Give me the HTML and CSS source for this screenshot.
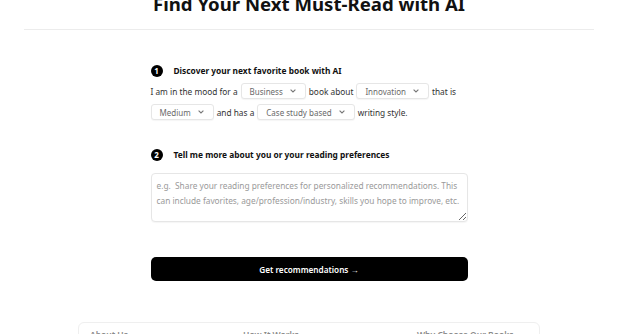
FILE: index.html
```html
<!DOCTYPE html>
<html lang="en">
<head>
<meta charset="utf-8">
<title>Find Your Next Must-Read with AI</title>
<link rel="stylesheet" href="styles.css">
</head>
<body>
<div class="page">
  <header class="top">
    <h1>Find Your Next Must-Read with AI</h1>
  </header>

  <main class="form">
    <div class="step">
      <span class="num">1</span>
      <h2>Discover your next favorite book with AI</h2>
    </div>
    <div class="line">
      <span>I am in the mood for a</span>
      <div class="select"><span>Business</span><svg width="6" height="4" viewBox="0 0 6 4"><path d="M0.6 0.6L3 3L5.4 0.6" fill="none" stroke="#777" stroke-width="1.1"/></svg></div>
      <span>book about</span>
      <div class="select"><span>Innovation</span><svg width="6" height="4" viewBox="0 0 6 4"><path d="M0.6 0.6L3 3L5.4 0.6" fill="none" stroke="#777" stroke-width="1.1"/></svg></div>
      <span>that is</span>
    </div>
    <div class="line">
      <div class="select"><span>Medium</span><svg width="6" height="4" viewBox="0 0 6 4"><path d="M0.6 0.6L3 3L5.4 0.6" fill="none" stroke="#777" stroke-width="1.1"/></svg></div>
      <span>and has a</span>
      <div class="select"><span>Case study based</span><svg width="6" height="4" viewBox="0 0 6 4"><path d="M0.6 0.6L3 3L5.4 0.6" fill="none" stroke="#777" stroke-width="1.1"/></svg></div>
      <span>writing style.</span>
    </div>

    <div class="step step2">
      <span class="num">2</span>
      <h2>Tell me more about you or your reading preferences</h2>
    </div>
    <textarea class="prefs" placeholder="e.g.  Share your reading preferences for personalized recommendations. This&#10;can include favorites, age/profession/industry, skills you hope to improve, etc."></textarea>

    <button class="go" type="button">Get recommendations →</button>
  </main>

  <section class="info">
    <h3 class="c1">About Us</h3>
    <h3 class="c2">How It Works</h3>
    <h3 class="c3">Why Choose Our Books</h3>
  </section>
</div>
</body>
</html>
```

FILE: styles.css
```css
* { box-sizing: border-box; }

html, body {
  margin: 0;
  padding: 0;
  background: #fff;
  overflow: hidden;
}

body {
  font-family: "Noto Sans", "Open Sans", sans-serif;
  color: #222;
  font-size: 8.3px;
}

.page {
  width: 618px;
  margin-top: -8px;
}

.top {
  margin: 0 24px;
  padding-bottom: 13px;
  border-bottom: 1px solid #ececec;
}

.top h1 {
  margin: 0;
  font-size: 18.6px;
  line-height: 24px;
  font-weight: 700;
  text-align: center;
  color: #111;
}

.form {
  width: 317px;
  margin: 35px auto 0;
  display: flex;
  flex-direction: column;
}

.step {
  display: flex;
  align-items: center;
  gap: 11px;
  height: 12px;
}

.step2 { margin-top: 29px; }

.num {
  width: 12px;
  height: 12px;
  border-radius: 50%;
  background: #000;
  color: #fff;
  font-size: 8px;
  font-weight: 700;
  line-height: 12px;
  text-align: center;
  flex: none;
}

.step h2 {
  margin: 0;
  font-size: 8.35px;
  font-weight: 700;
  color: #111;
  line-height: 12px;
}

.line {
  display: flex;
  align-items: center;
  gap: 3px;
  height: 16px;
  margin-top: 5px;
  color: #333;
  white-space: nowrap;
}

.step + .line { margin-top: 6px; }

.select {
  display: flex;
  align-items: center;
  gap: 7px;
  height: 16px;
  padding: 0 9px 0 8px;
  border: 1px solid #e6e6e6;
  border-radius: 3px;
  background: #fff;
  color: #6a6a6a;
  font-size: 8px;
  box-shadow: 0 1px 1px rgba(0,0,0,0.04);
}

.select svg { flex: none; }

.prefs {
  display: block;
  width: 317px;
  height: 49px;
  margin-top: 12px;
  padding: 4px 3px 4px 5px;
  border: 1px solid #e6e6e6;
  border-radius: 4px;
  font-family: "Noto Sans", "Open Sans", sans-serif;
  font-size: 8.3px;
  line-height: 15px;
  color: #333;
  resize: vertical;
  overflow: hidden;
  box-shadow: 0 1px 1px rgba(0,0,0,0.04);
}

.prefs::placeholder { color: #9a9a9a; }

.go {
  margin-top: 35px;
  width: 317px;
  height: 24px;
  border: 0;
  border-radius: 5px;
  background: #000;
  color: #fff;
  font-family: "Noto Sans", "Open Sans", sans-serif;
  font-size: 8.2px;
  font-weight: 600;
  padding: 0;
}

.info {
  width: 462px;
  margin: 41px auto 0;
  height: 60px;
  border: 1px solid #efefef;
  border-radius: 6px;
  display: grid;
  grid-template-columns: 153px 174px 1fr;
  padding: 5px 0 0 11px;
}

.info h3 {
  margin: 0;
  font-size: 8.5px;
  font-weight: 600;
  color: #8a8a8a;
  line-height: 14px;
}
```
